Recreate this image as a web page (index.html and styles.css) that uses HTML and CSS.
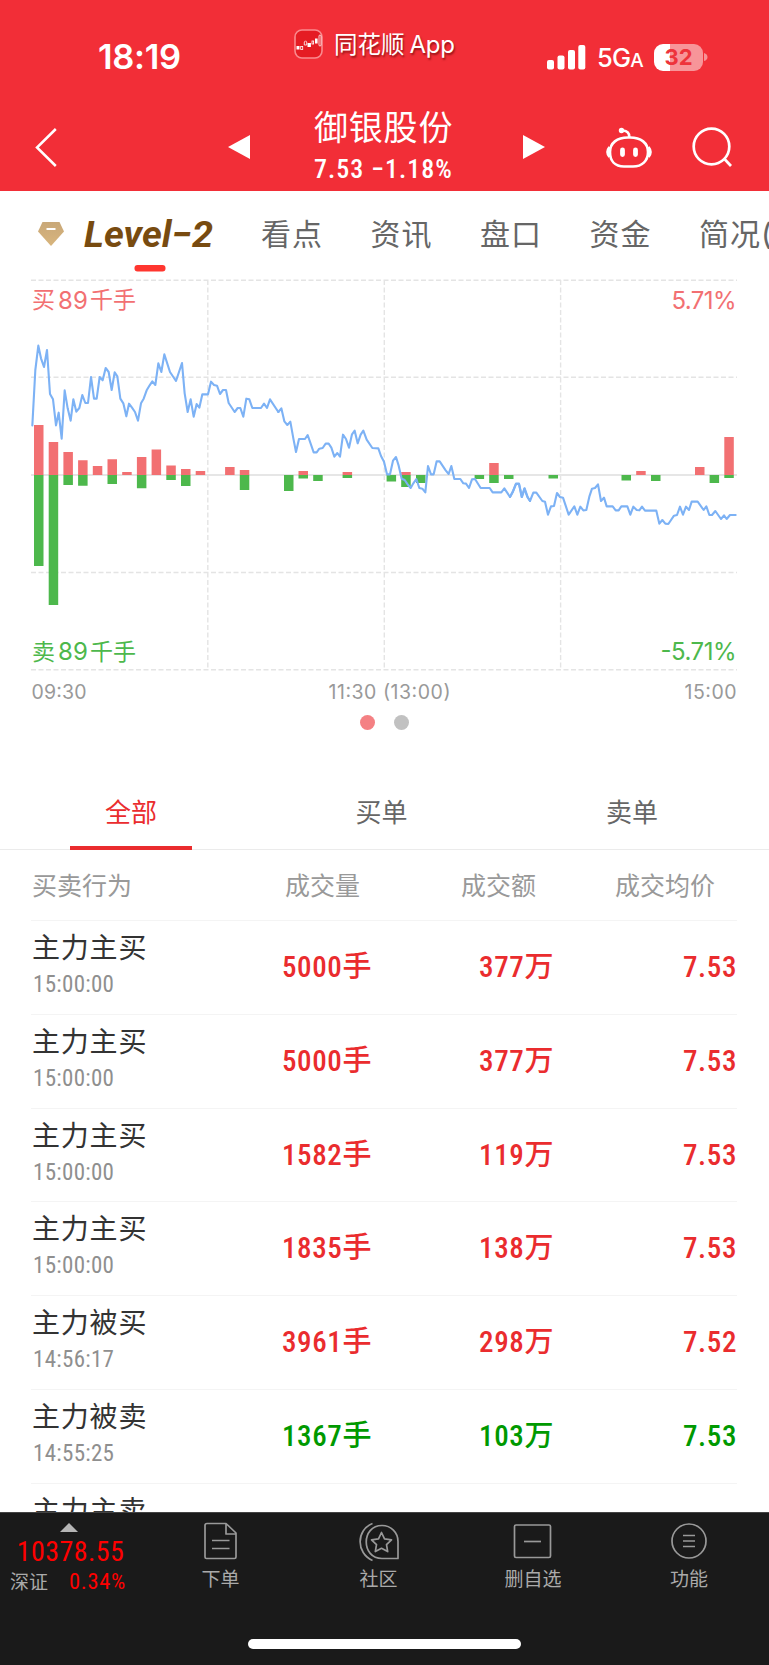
FILE: index.html
```html
<!DOCTYPE html>
<html lang="zh-CN">
<head>
<meta charset="utf-8">
<title>御银股份</title>
<link rel="stylesheet" href="styles.css">
</head>
<body>
<div class="app">
  <header class="header">
    <div class="status">
      <span class="clock">18:19</span>
      <div class="brand">
        <svg width="29" height="30" viewBox="0 0 29 30">
          <rect x="1" y="1" width="27" height="28" rx="7" fill="#e51c23" stroke="#fa8a8e" stroke-width="1.6"/>
          <g fill="#fff"><rect x="2.500" y="17" width="3" height="3.500"/><rect x="13.500" y="14" width="3.400" height="4"/><rect x="21" y="9.500" width="2.600" height="5"/></g>
          <g fill="none" stroke="#fff" stroke-width=".8"><rect x="6.700" y="17.500" width="2" height="3"/><path d="M10.300 16v-3l1.200-1.200 1.200 1.200v3z"/><rect x="18" y="12" width="1.600" height="3"/><rect x="25" y="6" width="2" height="11" rx="1"/></g>
        </svg>
        <span>同花顺<i>App</i></span>
      </div>
      <svg class="signal" width="40" height="25" viewBox="0 0 40 25" fill="#fff"><rect x="0" y="15" width="7" height="9.500" rx="2"/><rect x="10.500" y="10.500" width="7" height="14" rx="2"/><rect x="21" y="5" width="7" height="19.500" rx="2"/><rect x="31.300" y="0" width="7" height="24.500" rx="2"/></svg>
      <span class="network">5G<small>A</small></span>
      <div class="battery"><span>32</span></div>
      <svg class="nub" width="4" height="10" viewBox="0 0 4 10"><path d="M0 1Q3.500 2 3.500 5T0 9z" fill="#f79296"/></svg>
    </div>
    <div class="titlebar">
      <svg class="back" width="24" height="42" viewBox="0 0 24 42"><path d="M21.800 2 3 20.500l18.800 18.500" fill="none" stroke="#fff" stroke-width="2.500"/></svg>
      <svg class="prev" width="23" height="24" viewBox="0 0 23 24"><path d="M0 12 22 0v24z" fill="#fff"/></svg>
      <div class="stock"><b>御银股份</b><span>7.53 −1.18%</span></div>
      <svg class="next" width="23" height="24" viewBox="0 0 23 24"><path d="M22 12 0 0v24z" fill="#fff"/></svg>
      <svg class="robot" width="46" height="42" viewBox="0 0 46 42" fill="none" stroke="#fff" stroke-width="2.600">
        <path d="M24 10.500h-2C11 10.500 4 16 4 25s5 14.500 14 14.500h9C36 39.500 42 34 42 25S35 10.500 24 10.500z"/>
        <path d="M23.300 10C23.300 6 21 3.700 17 3.500"/><circle cx="15.500" cy="3.500" r="2.700" fill="#fff" stroke="none"/>
        <path d="M3.500 20Q-.5 25 3.500 30M42.500 20Q46.500 25 42.500 30" fill="#fff"/>
        <path d="M16.500 23v4.500M29.500 23v4.500" stroke-width="4.800" stroke-linecap="round"/>
      </svg>
      <svg class="search" width="42" height="42" viewBox="0 0 42 42" fill="none" stroke="#fff" stroke-width="2.700"><circle cx="19.500" cy="19.500" r="17.800"/><path d="M32 31.500 39 39"/></svg>
    </div>
  </header>

  <nav class="tabs">
    <svg class="diamond" width="28" height="26" viewBox="0 0 28 26"><defs><linearGradient id="gold" x2="0" y2="1"><stop stop-color="#c9a878"/><stop offset="1" stop-color="#d8b57d"/></linearGradient></defs><path d="M5.500 1h17L27 10.500 14 25 1 10.500z" fill="url(#gold)"/><path d="M9.500 8h9" stroke="#fff" stroke-width="2"/></svg>
    <div class="tab-active">
      <svg width="138" height="50" viewBox="0 0 138 50"><text x="1" y="35.500" textLength="129" lengthAdjust="spacingAndGlyphs" class="level">Level−2</text></svg>
    </div>
    <span>看点</span><span>资讯</span><span>盘口</span><span>资金</span><span>简况(</span>
  </nav>

  <section class="chart">
    <svg width="769" height="434" viewBox="0 270 769 434">
      <rect x="134.500" y="265" width="31" height="6.500" rx="3" fill="#ff362f"/>
      <g stroke="#e4e4e4" stroke-width="1.400" stroke-dasharray="5 2.500" fill="none">
        <path d="M31 280.300H737M31 377.300H737M31 572.500H737M31 669.700H737M207.800 280V669M384.300 280V669M560.600 280V669"/>
      </g>
      <path d="M31 475H737" stroke="#e6e6e6" stroke-width="1.800"/>
      <g fill="#f27072">
        <path d="M34 425h9.500v50H34zM48.700 442h9.500v33h-9.500zM63.400 452h9.500v23h-9.500zM78.100 460.300h9.500V475h-9.500zM92.800 466h9.500v9h-9.500zM107.500 459.300h9.500V475h-9.500zM122.200 472h9.500v3h-9.500zM136.900 457h9.500v18h-9.500zM151.600 449.500h9.500V475h-9.500zM166.300 465.500h9.500v9.500h-9.500zM181 469h9.500v6H181zM195.700 471h9.500v4h-9.500zM225.100 467h9.500v8h-9.500zM239.800 470h9.500v5h-9.500zM298.500 471h9.500v4h-9.500zM342.600 472h9.500v3h-9.500zM401.200 472h9.500v3h-9.500zM489.200 463h9.500v12h-9.500zM636.200 471h9.500v4h-9.500zM695 467h9.500v8H695zM724.300 437h9.500v38h-9.500z"/>
      </g>
      <g fill="#4db84c">
        <path d="M34 475h9.500v91H34zM48.700 475h9.500v130h-9.500zM63.400 475h9.500v10h-9.500zM78.100 475h9.500v10.700h-9.500zM107.500 475h9.500v9h-9.500zM136.900 475h9.500v13.300h-9.500zM166.300 475h9.500v5h-9.500zM181 475h9.500v11H181zM239.800 475h9.500v15h-9.500zM284 475h9.500v16H284zM298.500 475h9.500v3.500h-9.500zM313.200 475h9.500v6h-9.500zM342.600 475h9.500v3h-9.500zM386.600 475h9.500v6.500h-9.500zM401.200 475h9.500v12h-9.500zM416 475h9.500v8H416zM474.600 475h9.500v4h-9.500zM489.200 475h9.500v8h-9.500zM504 475h9.500v4H504zM548.500 475h9.500v3.500h-9.500zM621.500 475h9.500v5.500h-9.500zM651 475h9.500v6H651zM709.600 475h9.500v8h-9.500zM724.300 475h9.500v3h-9.500z"/>
      </g>
      <g class="price">
        <polyline transform="translate(20 330) scale(.33333)" points="37,286 46,120 55,47 63,85 72,111 81,60 90,192 99,208 108,286 116,248 125,326 134,181 143,235 152,272 160,208 169,245 178,234 187,195 196,219 204,219 213,141 222,206 230,206 239,141 248,151 257,114 266,126 275,180 284,127 292,139 301,206 310,220 319,259 327,221 336,233 345,246 354,272 363,220 371,206 380,181 389,166 397,154 406,165 415,100 424,126 433,73 450,126 468,153 486,99 494,190 503,246 512,208 521,260 530,222 538,233 547,193 564,193 573,155 582,165 591,167 600,192 609,180 618,180 626,219 644,246 653,234 661,234 670,260 679,206 688,208 697,234 723,234 732,221 741,234 750,208 775,246"/>
        <polyline transform="translate(270 400) scale(.33333)" points="25,36 34,25 43,64 52,75 61,65 70,115 78,156 87,117 105,117 113,105 131,157 140,157 148,146 158,144 167,131 176,131 184,143 193,170 202,159 210,170 219,104 228,117 237,143 246,103 254,92 263,130 272,104 280,92 290,119 307,144 325,145 333,168 342,185 351,223 360,223 369,182 378,171 386,197 395,236 404,240 413,253 422,264 430,250 439,237 448,264 457,266 466,277 474,198 483,223 491,223 500,184 509,184 527,211 536,222 544,198 553,237 571,237 580,250 588,251 597,264 606,238 615,237 632,264 659,264 668,277 694,277 703,265 720,291 729,275 738,251 747,251 756,291 764,265 773,291 780,303"/>
        <polyline transform="translate(510 410) scale(.33333)" points="0,261 9,243 18,222 27,222 35,261 43,236 52,261 60,273 70,248 79,248 97,273 105,275 114,314 123,289 132,288 141,249 150,261 159,263 168,290 176,314 193,289 202,314 211,290 220,301 229,300 238,260 246,236 255,234 264,223 273,273 282,263 290,289 308,289 317,301 326,301 334,289 352,289 361,314 370,290 380,300 388,301 396,290 405,302 439,302 448,341 457,330 466,341 475,342 492,317 501,315 510,290 519,314 528,290 537,300 545,275 563,275 581,300 589,289 598,315 606,315 616,303 633,327 642,316 650,327 660,315 677,315"/>
      </g>
      <g class="limit up"><text x="32" y="308">买</text><text x="58" y="308.500" textLength="30" class="num">89</text><text x="90" y="308" textLength="46">千手</text><text x="736.500" y="308.500" text-anchor="end" textLength="65" class="num">5.71%</text></g>
      <g class="limit down"><text x="32" y="660">卖</text><text x="58" y="660" textLength="30" class="num">89</text><text x="90" y="660" textLength="46">千手</text><text x="736.500" y="660" text-anchor="end" textLength="76" class="num">-5.71%</text></g>
      <g class="axis"><text x="31.500" y="699" textLength="55">09:30</text><text x="328.500" y="699" textLength="122">11:30 (13:00)</text><text x="684.500" y="699" textLength="52">15:00</text></g>
    </svg>
  </section>
  <div class="dots"><i class="on"></i><i></i></div>

  <nav class="filters"><span class="current">全部</span><span>买单</span><span>卖单</span></nav>

  <main class="list">
    <div class="head"><span>买卖行为</span><span>成交量</span><span>成交额</span><span>成交均价</span></div>
    <div class="row"><div class="who"><b>主力主买</b><small>15:00:00</small></div><span class="vol">5000手</span><span class="amt">377万</span><span class="avg">7.53</span></div>
    <div class="row"><div class="who"><b>主力主买</b><small>15:00:00</small></div><span class="vol">5000手</span><span class="amt">377万</span><span class="avg">7.53</span></div>
    <div class="row"><div class="who"><b>主力主买</b><small>15:00:00</small></div><span class="vol">1582手</span><span class="amt">119万</span><span class="avg">7.53</span></div>
    <div class="row"><div class="who"><b>主力主买</b><small>15:00:00</small></div><span class="vol">1835手</span><span class="amt">138万</span><span class="avg">7.53</span></div>
    <div class="row"><div class="who"><b>主力被买</b><small>14:56:17</small></div><span class="vol">3961手</span><span class="amt">298万</span><span class="avg">7.52</span></div>
    <div class="row sell"><div class="who"><b>主力被卖</b><small>14:55:25</small></div><span class="vol">1367手</span><span class="amt">103万</span><span class="avg">7.53</span></div>
    <div class="row sell"><div class="who"><b>主力主卖</b></div></div>
  </main>

  <footer class="dock">
    <div class="items">
      <div class="index">
        <svg width="18" height="9" viewBox="0 0 18 9"><path d="M9 0l9 9H0z" fill="#b5b5b5"/></svg>
        <b>10378.55</b>
        <div><span>深证</span><em>0.34%</em></div>
      </div>
      <div class="item order"><svg width="36" height="38" viewBox="0 0 36 38"><path d="M4 1.500h19L33 11v24q0 1.500-1.500 1.500h-28Q2 36.500 2 35V3.500Q2 1.500 4 1.500zM23 2v10h9.500M9 18.500h17.500M9 26.500h17.500"/></svg><span>下单</span></div>
      <div class="item social"><svg width="42" height="40" viewBox="0 0 42 40"><path d="M14.500 1.500C-2 8-2 31 14.500 38.500M40 36.500H24C3 36.500 3 3.500 24 3.500c9 0 16 7 16 16z"/><path d="M23.500 10.500l3 6.300 7 1-5 4.900 1.200 6.900-6.200-3.300-6.200 3.300 1.200-6.900-5-4.900 7-1z"/></svg><span>社区</span></div>
      <div class="item remove"><svg width="40" height="38" viewBox="0 0 40 38"><rect x="1.500" y="3" width="36" height="32.500" rx="1.500"/><path d="M11 19.500h17"/></svg><span>删自选</span></div>
      <div class="item more"><svg width="38" height="38" viewBox="0 0 38 38"><circle cx="19" cy="19" r="17"/><path d="M13 13.500h12M13 19h12M13 24.500h12"/></svg><span>功能</span></div>
    </div>
    <div class="home"></div>
  </footer>
</div>
</body>
</html>
```
FILE: styles.css
```css
* { box-sizing: border-box; }
body { margin: 0; background: #fff; }
.app {
  width: 769px; height: 1665px; overflow: hidden;
  display: flex; flex-direction: column;
  font-family: Inter, "Noto Sans CJK SC", sans-serif; color: #333;
}
svg { display: block; flex: none; }
i, em { font-style: normal; }

.header { height: 191px; flex: none; background: #f22e37; color: #fff; }
.status { display: flex; height: 100px; padding-top: 29px; white-space: nowrap; }
.clock { width: 196px; margin-left: 98px; padding-top: 8px; font-size: 34.500px; line-height: 40px; font-weight: 600; letter-spacing: -.3px; }
.brand { display: flex; width: 253px; font-size: 23.500px; line-height: 32px; text-shadow: 1px 2px 2px rgba(90, 0, 0, .6); }
.brand span { margin-left: 11px; }
.brand i { margin-left: 5px; font-size: 24px; letter-spacing: -.3px; }
.signal { margin-top: 16px; }
.network { width: 57px; margin-left: 10px; padding-top: 14px; font-size: 25.500px; line-height: 30px; font-weight: 500; letter-spacing: -.8px; }
.network small { font-size: 19px; }
.battery { width: 49px; height: 27px; margin-top: 15px; border-radius: 9px; background: linear-gradient(90deg, #fff 16px, #f79599 16px); color: #ee333b; text-align: center; }
.battery span { font-size: 22px; line-height: 27px; font-weight: 700; }
.nub { margin: 23px 0 0 1px; }

.titlebar { display: flex; height: 91px; }
.back { margin: 27px 0 0 34px; }
.prev { margin: 35px 0 0 170px; }
.stock { display: flex; flex-direction: column; width: 142px; margin: 6px 0 0 63px; white-space: nowrap; }
.stock b { font-size: 34px; line-height: 44px; font-weight: 400; letter-spacing: .8px; }
.stock span { font: 500 26px/34px Roboto, sans-serif; font-stretch: 75%; letter-spacing: 1px; margin-top: 2px; }
.next { margin: 35px 0 0 67px; }
.robot { margin: 27px 0 0 60px; }
.search { margin: 27px 0 0 40px; }

.tabs { display: flex; height: 79px; flex: none; overflow: hidden; white-space: nowrap; font-size: 30px; color: #666; }
.diamond { margin: 30px 0 0 37px; }
.tab-active { width: 138px; margin: 20px 38px 0 18px; }
.level { font: italic 700 37px Roboto, sans-serif; fill: #784b10; }
.tabs span { flex: none; width: 109.500px; padding-left: 2px; line-height: 44px; margin-top: 21px; letter-spacing: 1px; }

.chart { height: 434px; flex: none; }
.chart svg { overflow: visible; }
.price polyline { fill: none; stroke: #7db2f5; stroke-width: 6.300; stroke-linejoin: round; stroke-linecap: round; }
.limit { font-size: 23px; }
.num { font-size: 24px; }
.up { fill: #f27072; }
.down { fill: #4db84c; }
.axis { font-size: 19.500px; fill: #999; }

.dots { display: flex; justify-content: center; gap: 19px; height: 59px; padding-top: 10.500px; flex: none; }
.dots i { width: 15px; height: 15px; border-radius: 50%; background: #c1c1c1; }
.dots .on { background: #f48083; }

.filters { display: flex; justify-content: space-between; flex: none; height: 87px; padding: 0 76px 0 70px; border-bottom: 1px solid #ebebeb; font-size: 26px; color: #666; }
.filters span { width: 122px; height: 87px; padding-top: 30px; line-height: 40px; text-align: center; }
.filters .current { color: #ea2c2e; border-bottom: 4px solid #ea2c2e; }

.list { flex: 1; min-height: 0; overflow: hidden; margin: 0 32px 0 31px; }
.head { display: grid; grid-template-columns: 253px 176px 154px 1fr; height: 71px; padding: 14px 0 0 1px; border-bottom: 1.500px solid #f4f4f4; font-size: 25px; line-height: 44px; color: #999; }
.row { display: grid; grid-template-columns: 180px 161px 182px 183px; height: 93.800px; border-bottom: 1.500px solid #f4f4f4; color: #ea2c2e; }
.sell { color: #009900; }
.who { display: flex; flex-direction: column; padding: 7px 0 0 1px; }
.who b { font-size: 28px; line-height: 40px; font-weight: 400; letter-spacing: .8px; color: #333; }
.who small { font: 400 23px/34px Roboto, sans-serif; font-stretch: 75%; letter-spacing: .3px; color: #8f8f8f; padding-left: 1px; }
.vol, .amt, .avg { font: 500 29px/92px Roboto, "Noto Sans CJK SC", sans-serif; font-stretch: 75%; letter-spacing: .6px; text-align: right; }

.dock { height: 153px; flex: none; background: #1a1a1a; color: #aaa; border-top: 1px solid #444; }
.items { display: flex; height: 126px; }
.index { width: 138px; flex: none; padding-top: 10px; display: flex; flex-direction: column; align-items: center; }
.index b { margin-top: 5px; padding-left: 3px; font: 400 28px/30px Roboto, sans-serif; font-stretch: 75%; letter-spacing: .4px; color: #f00; }
.index div { display: flex; gap: 21px; width: 120px; margin-left: 2px; line-height: 31px; font-size: 19px; }
.index em { font: 400 22.500px/28px Roboto, sans-serif; font-stretch: 75%; letter-spacing: .7px; color: #f00; }
.item { display: flex; flex-direction: column; align-items: center; padding-top: 9px; font-size: 19px; line-height: 30px; white-space: nowrap; }
.item svg { fill: none; stroke: #999; stroke-width: 1.700; stroke-linejoin: round; }
.item span { margin-top: 5px; }
.social span { margin-top: 3px; }
.order { width: 165px; }
.social { width: 151px; }
.remove { width: 158px; }
.more { width: 154px; }
.home { width: 273px; height: 10px; margin: 0 auto; border-radius: 5px; background: #fff; }
```
